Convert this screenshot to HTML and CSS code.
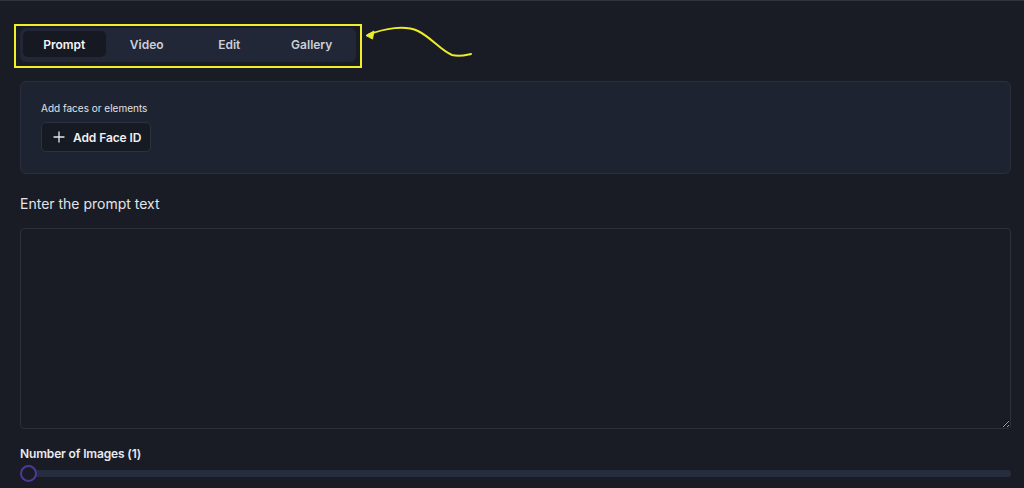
FILE: index.html
```html
<!DOCTYPE html>
<html lang="en">
<head>
<meta charset="utf-8">
<title>Prompt</title>
<link rel="stylesheet" href="styles.css">
</head>
<body>
<main class="page">
  <div class="tabs-row">
    <nav class="tabs">
      <button class="tab active">Prompt</button>
      <button class="tab">Video</button>
      <button class="tab">Edit</button>
      <button class="tab">Gallery</button>
    </nav>
    <div class="highlight"></div>
    <svg class="arrow" viewBox="360 20 120 45" width="120" height="45">
      <path d="M368 35 C 385 28, 405 25, 418 31 C 432 38, 440 50, 452 55 C 460 57, 466 55, 471 54" fill="none" stroke="#ecec2a" stroke-width="2" stroke-linecap="round"/>
      <path d="M366 35.5 L374 31 L372.5 39 Z" fill="#ecec2a" stroke="#ecec2a" stroke-width="1" stroke-linejoin="round"/>
    </svg>
  </div>

  <section class="card">
    <div class="card-label">Add faces or elements</div>
    <button class="face-btn">
      <svg class="plus" viewBox="0 0 12 12" width="12" height="12"><path d="M6 1 V11 M1 6 H11" stroke="#e6e8ee" stroke-width="1.3" stroke-linecap="round"/></svg>
      <span>Add Face ID</span>
    </button>
  </section>

  <label class="prompt-label" for="prompt">Enter the prompt text</label>
  <textarea id="prompt" class="prompt"></textarea>

  <div class="num-label">Number of Images (1)</div>
  <div class="slider">
    <div class="thumb"></div>
  </div>
</main>
</body>
</html>
```

FILE: styles.css
```css
* { box-sizing: border-box; }
html, body { margin: 0; padding: 0; }
body {
  background: #191c25;
  border-top: 1px solid #30343f;
  font-family: Inter, "Noto Sans", "Liberation Sans", sans-serif;
  color: #e4e6eb;
  height: 488px;
  overflow: hidden;
}
.page {
  padding: 0 13px 0 20px;
  display: flex;
  flex-direction: column;
}
.tabs-row {
  position: relative;
  margin-top: 27px;
  height: 34px;
}
.tabs {
  width: 336px;
  height: 34px;
  padding: 3px;
  background: #212737;
  border-radius: 6px;
  display: grid;
  grid-template-columns: repeat(4, 1fr);
  align-items: start;
}
.tab {
  height: 26px;
  border: none;
  background: transparent;
  color: #ccd0d9;
  font-family: inherit;
  font-size: 12px;
  font-weight: 600;
  border-radius: 5px;
  padding: 0;
  cursor: pointer;
}
.tab.active {
  background: #161922;
  color: #f5f6f8;
}
.highlight {
  position: absolute;
  left: -6px;
  top: -4px;
  width: 348px;
  height: 44px;
  border: 2px solid #f0f02a;
  pointer-events: none;
}
.arrow {
  position: absolute;
  left: 340px;
  top: -8px;
}
.card {
  margin-top: 19px;
  background: #1e2331;
  border: 1px solid #2a2f3c;
  border-radius: 6px;
  padding: 19px 20px 20px;
  height: 93px;
}
.card-label {
  font-size: 10px;
  color: #e0e2e8;
  line-height: 14px;
}
.face-btn {
  margin-top: 7px;
  height: 30px;
  width: 110px;
  display: flex;
  align-items: center;
  justify-content: flex-start;
  gap: 8px;
  padding: 0 0 0 11px;
  background: #161a23;
  border: 1px solid #2d323e;
  border-radius: 5px;
  color: #f0f1f4;
  font-family: inherit;
  font-size: 12px;
  font-weight: 600;
  white-space: nowrap;
  letter-spacing: -0.1px;
}
.plus { flex: none; }
.prompt-label {
  margin-top: 21px;
  font-size: 14px;
  line-height: 18px;
  color: #e2e4e9;
}
.prompt {
  margin-top: 15px;
  height: 201px;
  width: 100%;
  background: #191c25;
  border: 1px solid #2c303c;
  border-radius: 4px;
  resize: vertical;
  color: #e4e6eb;
  font-family: inherit;
  outline: none;
}
.num-label {
  margin-top: 17px;
  font-size: 12px;
  font-weight: 600;
  line-height: 16px;
  color: #e8eaee;
  letter-spacing: -0.15px;
}
.slider {
  position: relative;
  margin-top: 8px;
  height: 7px;
  background: #262d3e;
  border-radius: 4px;
}
.thumb {
  position: absolute;
  left: 0;
  top: -5px;
  width: 17px;
  height: 17px;
  border-radius: 50%;
  border: 2px solid #4e3a94;
  background: #191c25;
}
```
